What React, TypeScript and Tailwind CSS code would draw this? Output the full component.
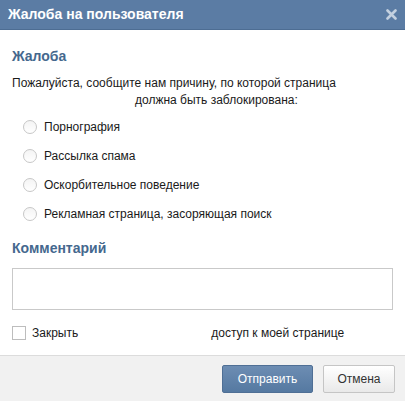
import React from 'react';

const REASONS = [
  'Порнография',
  'Рассылка спама',
  'Оскорбительное поведение',
  'Рекламная страница, засоряющая поиск',
];

function Radio() {
  return (
    <span className="block h-[14px] w-[14px] shrink-0 rounded-full border border-[#c7c7c7] bg-gradient-to-b from-[#f4f4f4] to-white" />
  );
}

export default function App() {
  return (
    <div className="flex h-[401px] w-[405px] flex-col bg-white font-['Liberation_Sans',Arial,sans-serif] text-[12px] text-[#1a1a1a]">
      <div className="flex h-[30px] shrink-0 items-center justify-between border-b border-[#4d6d93] bg-[#5b7ca4] pl-[8px] pr-[8px]">
        <span className="text-[14px] font-bold text-white">Жалоба на пользователя</span>
        <svg width="11" height="11" viewBox="0 0 11 11" aria-hidden="true">
          <path d="M1.5 1.5L9.5 9.5M9.5 1.5L1.5 9.5" stroke="#c3d0df" strokeWidth="2.6" strokeLinecap="round" />
        </svg>
      </div>

      <div className="flex flex-1 flex-col px-[12px]">
        <div className="mt-[16px] text-[14px] font-bold text-[#45688e]">Жалоба</div>
        <p className="mt-[8px] leading-[17px]">
          Пожалуйста, сообщите нам причину, по которой страница
          <br />
          <span className="pl-[123px]">должна быть заблокирована:</span>
        </p>

        <div className="mt-[11px] flex flex-col gap-[15px] pl-[11px]">
          {REASONS.map((reason) => (
            <label key={reason} className="flex h-[14px] items-center gap-[7px]">
              <Radio />
              <span>{reason}</span>
            </label>
          ))}
        </div>

        <div className="mt-[17px] text-[14px] font-bold text-[#45688e]">Комментарий</div>
        <div className="mt-[9px] h-[42px] w-[381px] border border-[#c9c9c9] bg-white" />

        <div className="mt-[14px] flex items-center">
          <span className="block h-[14px] w-[14px] border border-[#bdbdbd] bg-white" />
          <span className="ml-[6px]">Закрыть</span>
          <span className="ml-[133px]">доступ к моей странице</span>
        </div>
      </div>

      <div className="flex h-[46px] shrink-0 items-center justify-end gap-[10px] border-t border-[#dcdcdc] bg-[#f1f1f1] pr-[10px]">
        <button className="h-[28px] w-[91px] rounded-[2px] border border-[#4f6f95] bg-gradient-to-b from-[#6d8db3] to-[#5579a1] text-[12px] text-white">
          Отправить
        </button>
        <button className="h-[28px] w-[72px] rounded-[2px] border border-[#c5c5c5] bg-gradient-to-b from-white to-[#e9e9e9] text-[12px] text-[#333]">
          Отмена
        </button>
      </div>
    </div>
  );
}
